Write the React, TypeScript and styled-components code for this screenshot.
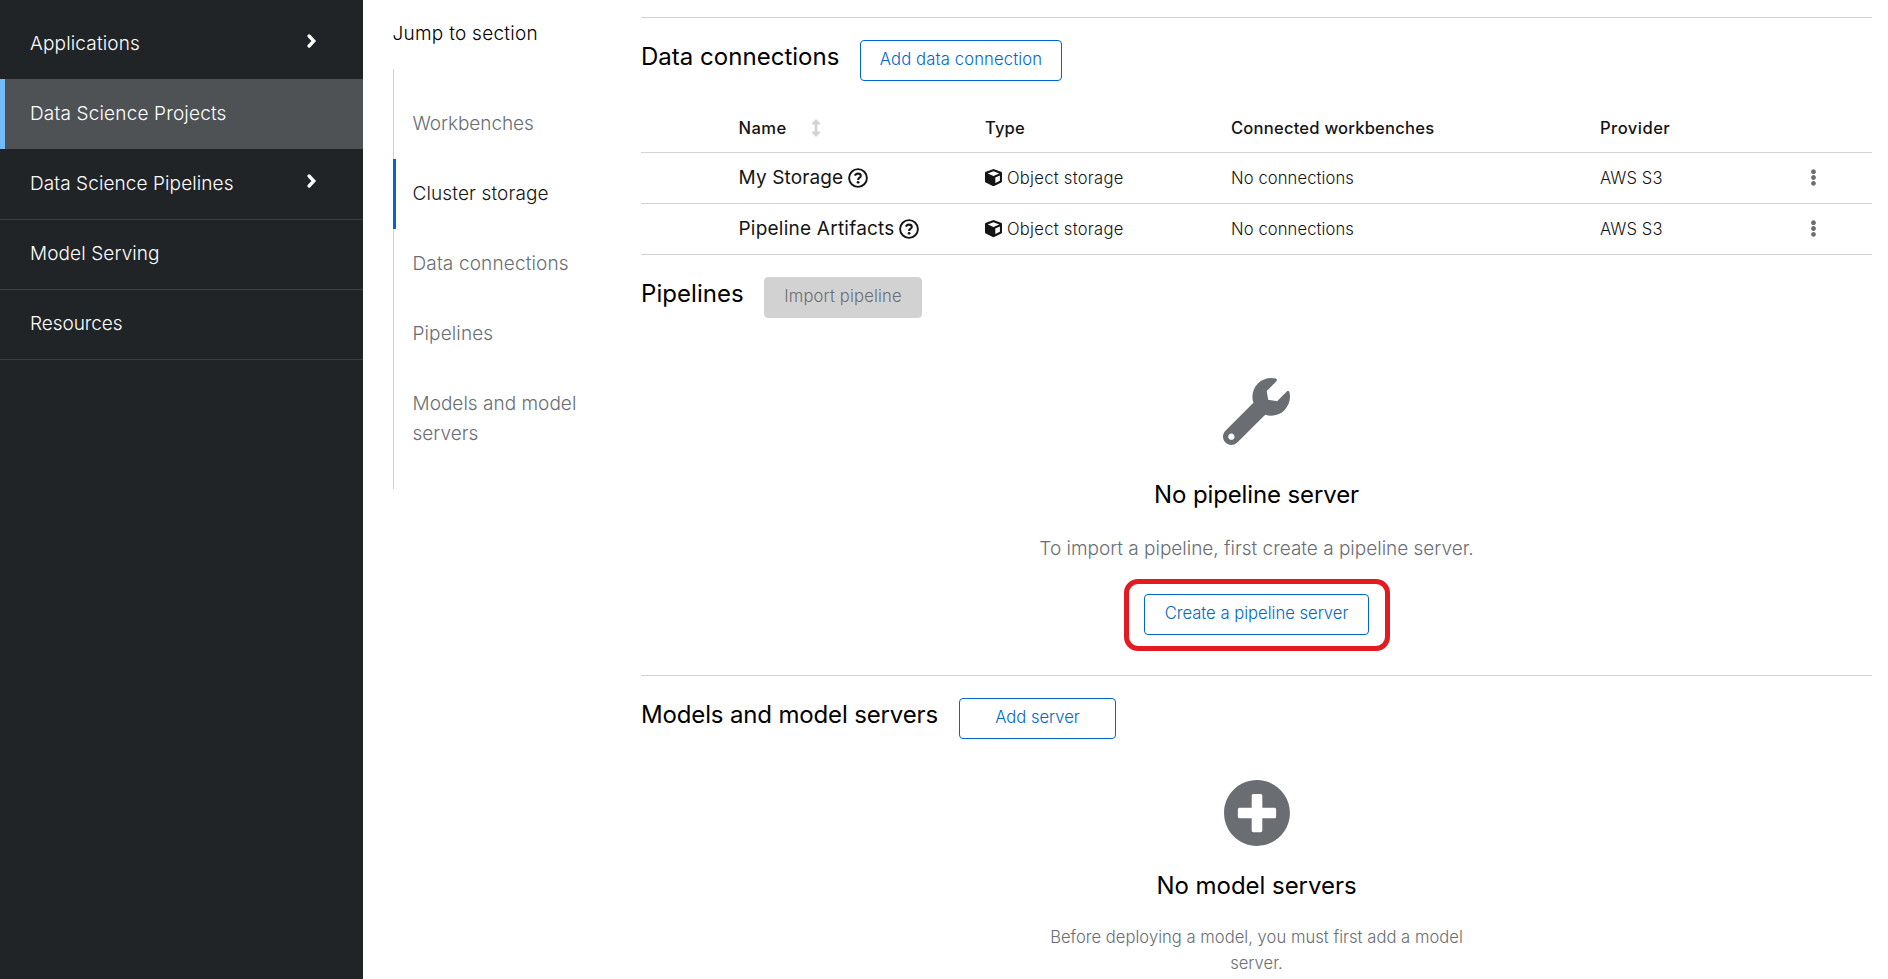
import React from 'react';
import styled, { createGlobalStyle, css } from 'styled-components';
import { FaWrench, FaPlusCircle, FaEllipsisV } from 'react-icons/fa';

const GlobalStyle = createGlobalStyle`
  *, *::before, *::after { box-sizing: border-box; }
  body {
    margin: 0;
    background: #fff;
    color: #151515;
    font-family: Inter, "Liberation Sans", sans-serif;
    font-size: 16.6px;
    font-weight: 340;
    overflow: hidden;
  }
  h2, h3, p { margin: 0; }
  button { font: inherit; }
`;

interface Tracked { $track?: number }
const tracking = css<Tracked>`
  letter-spacing: ${({ $track = 0.2 }) => $track}px;
  white-space: nowrap;
`;

const Page = styled.div`
  display: grid;
  grid-template-columns: 363px 278px 1231px;
  width: 1888px;
  height: 979px;
  overflow: hidden;
`;

const Sidebar = styled.nav`
  background: #212427;
  padding-top: 9px;
`;

const NavItem = styled.a<Tracked & { $current?: boolean; $ruled?: boolean }>`
  ${tracking}
  display: flex;
  align-items: center;
  justify-content: space-between;
  height: 70px;
  padding: 0 46px 1px 25px;
  border-left: 5px solid ${({ $current }) => ($current ? '#73bcf7' : 'transparent')};
  background: ${({ $current }) => ($current ? '#4f5255' : 'none')};
  box-shadow: ${({ $ruled }) => ($ruled ? '0 1px 0 #3c3f42' : 'none')};
  color: #fff;
  font-size: 19px;
`;

const ChevronSvg = styled.svg`
  width: 10px;
  height: 14px;
  margin-bottom: 5px;
`;

const JumpPanel = styled.aside`
  padding: 18px 45px 0 30px;
  font-size: 19px;
`;

const JumpTitle = styled.div<Tracked>`
  ${tracking}
  margin-left: -0.5px;
  color: #000;
  line-height: 31px;
`;

const JumpList = styled.div`
  margin-top: 20px;
  padding: 20px 0;
  box-shadow: inset 1px 0 0 #d2d2d2;
`;

const JumpItem = styled.a<Tracked & { $current?: boolean }>`
  ${tracking}
  display: block;
  white-space: normal;
  padding: 20px 0 20px 16.5px;
  line-height: 30px;
  border-left: 3px solid ${({ $current }) => ($current ? '#06c' : 'transparent')};
  color: ${({ $current }) => ($current ? '#151515' : '#6a6e73')};
`;

const Content = styled.main`
  padding-top: 17px;
`;

const Section = styled.section<{ $height?: number; $ruled?: boolean }>`
  height: ${({ $height }) => ($height ? `${$height}px` : 'auto')};
  border-top: ${({ $ruled }) => ($ruled ? '1px solid #d2d2d2' : '0')};
  padding-top: 22px;
`;

const SectionHeader = styled.header`
  display: flex;
  align-items: flex-start;
  gap: 20px;
  height: 41px;
`;

const SectionTitle = styled.h2<Tracked & { $width: number }>`
  ${tracking}
  width: ${({ $width }) => $width}px;
  color: #000;
  font-size: 24px;
  font-weight: 430;
  line-height: 34px;
`;

const Button = styled.button<Tracked & { $width: number; $disabled?: boolean }>`
  ${tracking}
  width: ${({ $width }) => $width}px;
  height: 41px;
  padding: 0 0 3px;
  border: 1px solid ${({ $disabled }) => ($disabled ? '#d2d2d2' : '#06c')};
  border-radius: 4px;
  background: ${({ $disabled }) => ($disabled ? '#d2d2d2' : '#fff')};
  color: ${({ $disabled }) => ($disabled ? '#6a6e73' : '#06c')};
`;

const tableColumns = css`
  display: grid;
  grid-template-columns: 97px 247px 246px 369px 1fr 80px;
  align-items: center;
  border-bottom: 1px solid #d2d2d2;
`;

const TableHead = styled.div`
  ${tableColumns}
  height: 72px;
  padding-top: 22px;
  font-weight: 520;
`;

const TableRow = styled.div`
  ${tableColumns}
  height: 51px;
`;

const HeadCell = styled.div<Tracked>`
  ${tracking}
  display: flex;
  align-items: center;
  gap: 24px;
`;

const Cell = styled.div<Tracked>`
  ${tracking}
  display: flex;
  align-items: center;
  gap: 5px;
`;

const NameCell = styled(Cell)`
  padding: 0 0 1px 0.5px;
  gap: 4.5px;
  font-size: 19px;
  font-weight: 420;
`;

const NameHead = styled(HeadCell)`
  padding-left: 0.5px;
`;

const Kebab = styled(FaEllipsisV)`
  width: 17px;
  height: 17px;
  margin: 0 0 1px 13px;
  color: #6a6e73;
`;

const EmptyState = styled.div<{ $top: number }>`
  display: flex;
  flex-direction: column;
  align-items: center;
  padding-top: ${({ $top }) => $top}px;
  text-align: center;

  > svg { color: #6a6e73; flex: none; }
`;

const EmptyTitle = styled.h3<Tracked & { $top: number }>`
  ${tracking}
  margin-top: ${({ $top }) => $top}px;
  color: #000;
  font-size: 24px;
  font-weight: 430;
  line-height: 32px;
`;

const EmptyText = styled.p<Tracked & { $large?: boolean }>`
  ${tracking}
  margin-top: ${({ $large }) => ($large ? 23 : 22)}px;
  color: #6a6e73;
  font-size: ${({ $large }) => ($large ? 19 : 16.6)}px;
  line-height: ${({ $large }) => ($large ? 29 : 26)}px;
`;

const Callout = styled.div`
  display: flex;
  justify-content: center;
  width: 266px;
  height: 72px;
  margin-top: 16px;
  padding-top: 10px;
  border: 5px solid #e21b23;
  border-radius: 14px;
`;

const Chevron = () => (
  <ChevronSvg viewBox="0 0 10 14" fill="none" stroke="#fff" strokeWidth="3.3" strokeLinecap="round">
    <path d="M2.1 2 6.8 7 2.1 12" />
  </ChevronSvg>
);

const SortIcon = () => (
  <svg width="10" height="18" viewBox="0 0 10 18" fill="#d2d2d2">
    <path d="M5 0 9 4.2Q9.3 5.4 8.4 5.4H6.3V12.6H8.4Q9.3 12.6 9 13.8L5 18 1 13.8Q.7 12.6 1.6 12.6H3.7V5.4H1.6Q.7 5.4 1 4.2Z" />
  </svg>
);

const CubeSvg = styled.svg`
  width: 17px;
  height: 17px;
  margin-bottom: 1px;
`;

const CubeIcon = () => (
  <CubeSvg viewBox="0 0 17 17" fill="#151515" fillRule="evenodd">
    <path d="M7.9.2Q8.5 0 9.1.2L16.1 2.8Q17 3.1 17 4.1V12.2Q17 13 16.3 13.4L9.2 16.9Q8.5 17.2 7.8 16.9L.7 13.4Q0 13 0 12.2V4.1Q0 3.1.9 2.8ZM8.5 2.2 2.7 4.4 8.5 6.9 14.3 4.4ZM10.3 8.4V14.1L14.9 11.8V6.5Z" />
  </CubeSvg>
);

const HelpIcon = () => (
  <svg width="20" height="20" viewBox="0 0 20 20" fill="none" stroke="#151515">
    <circle cx="10" cy="10" r="8.9" strokeWidth="1.9" />
    <path d="M7 7.7C7.5 6.2 8.6 5.6 10 5.6c1.6 0 2.8.9 2.8 2.3C12.8 9.7 10.1 9.7 10.1 11.9" strokeWidth="2.1" />
    <circle cx="10.1" cy="14.3" r="1.4" fill="#151515" stroke="none" />
  </svg>
);

const connections = [
  { name: 'My Storage', track: 0.13 },
  { name: 'Pipeline Artifacts', track: 0.23 },
];

export default function App() {
  return (
    <>
      <GlobalStyle />
      <Page>
        <Sidebar>
          <NavItem $track={0.16}>Applications<Chevron /></NavItem>
          <NavItem $current $track={0.17}>Data Science Projects</NavItem>
          <NavItem $ruled $track={0.09}>Data Science Pipelines<Chevron /></NavItem>
          <NavItem $ruled $track={0.1}>Model Serving</NavItem>
          <NavItem $ruled $track={-0.05}>Resources</NavItem>
        </Sidebar>

        <JumpPanel>
          <JumpTitle $track={0.27}>Jump to section</JumpTitle>
          <JumpList>
            <JumpItem $track={-0.06}>Workbenches</JumpItem>
            <JumpItem $current $track={0.13}>Cluster storage</JumpItem>
            <JumpItem $track={0.15}>Data connections</JumpItem>
            <JumpItem $track={0.12}>Pipelines</JumpItem>
            <JumpItem $track={0.02}>Models and model servers</JumpItem>
          </JumpList>
        </JumpPanel>

        <Content>
          <Section $ruled>
            <SectionHeader>
              <SectionTitle $width={199} $track={0.02}>Data connections</SectionTitle>
              <Button $width={202} $track={0.15}>Add data connection</Button>
            </SectionHeader>
            <TableHead>
              <span />
              <NameHead $track={0.45}>Name <SortIcon /></NameHead>
              <HeadCell $track={0.1}>Type</HeadCell>
              <HeadCell $track={0.2}>Connected workbenches</HeadCell>
              <HeadCell $track={0.45}>Provider</HeadCell>
            </TableHead>
            {connections.map(({ name, track }) => (
              <TableRow key={name}>
                <span />
                <NameCell $track={track}>{name}<HelpIcon /></NameCell>
                <Cell $track={0.26}><CubeIcon />Object storage</Cell>
                <Cell $track={0.1}>No connections</Cell>
                <Cell $track={0.1}>AWS S3</Cell>
                <Kebab />
              </TableRow>
            ))}
          </Section>

          <Section $height={420}>
            <SectionHeader>
              <SectionTitle $width={103} $track={0.05}>Pipelines</SectionTitle>
              <Button $disabled $width={158} $track={0.16}>Import pipeline</Button>
            </SectionHeader>
            <EmptyState $top={60}>
              <FaWrench size={67} />
              <EmptyTitle $top={34} $track={-0.12}>No pipeline server</EmptyTitle>
              <EmptyText $large $track={-0.01}>To import a pipeline, first create a pipeline server.</EmptyText>
              <Callout>
                <Button $width={225} $track={0}>Create a pipeline server</Button>
              </Callout>
            </EmptyState>
          </Section>

          <Section $ruled>
            <SectionHeader>
              <SectionTitle $width={298} $track={-0.15}>Models and model servers</SectionTitle>
              <Button $width={157} $track={0}>Add server</Button>
            </SectionHeader>
            <EmptyState $top={40}>
              <FaPlusCircle size={68} />
              <EmptyTitle $top={23} $track={-0.03}>No model servers</EmptyTitle>
              <EmptyText $track={0.02}>Before deploying a model, you must first add a model<br />server.</EmptyText>
            </EmptyState>
          </Section>
        </Content>
      </Page>
    </>
  );
}
